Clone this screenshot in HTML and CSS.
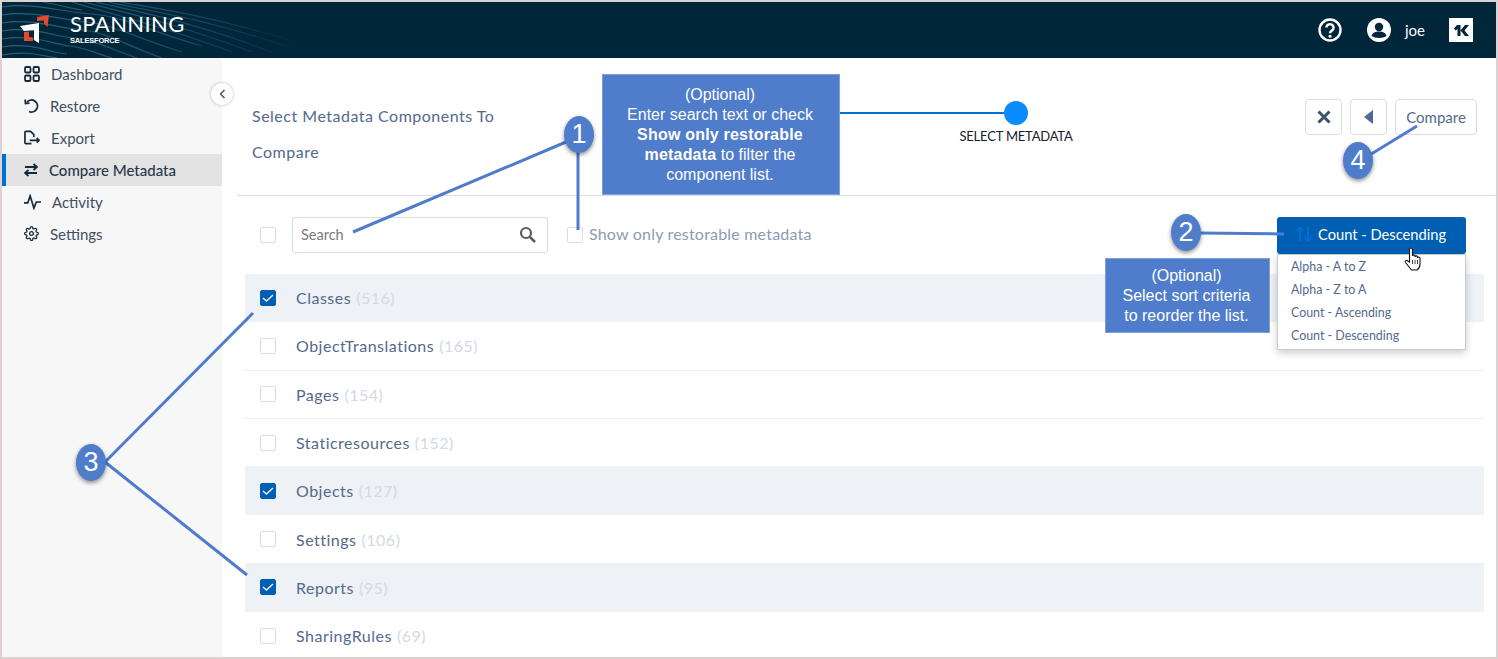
FILE: index.html
```html
<!DOCTYPE html>
<html lang="en">
<head>
  <meta charset="UTF-8" />
  <title>Spanning - Compare Metadata</title>
  <link rel="stylesheet" href="styles.css">
</head>
<body>
  <div class="frame">
    <header class="topbar">
      <svg class="waves" width="300" height="56" viewBox="0 0 300 56">
        <defs>
          <linearGradient id="waveFade" gradientUnits="userSpaceOnUse" x1="0" y1="0" x2="300" y2="0">
            <stop offset="0" stop-color="#2a6179" />
            <stop offset="0.55" stop-color="#1d5068" />
            <stop offset="1" stop-color="#00263a" />
          </linearGradient>
        </defs>
        <g fill="none" stroke="url(#waveFade)" stroke-width="1.200">
          <path d="M0 5C30 0 60 10 90 12S150 30 200 44" />
          <path d="M0 13C30 8 60 18 85 20S140 38 180 50" />
          <path d="M0 21C30 16 55 26 80 28S125 44 160 56" />
          <path d="M0 29C30 24 50 34 72 36S110 48 135 56" />
          <path d="M0 37C30 32 50 42 68 44S95 52 110 56" />
          <path d="M0 45C30 40 45 50 65 52" />
          <path d="M0 53C25 48 40 54 55 56" />
          <path d="M70 0C100 10 150 20 230 50" />
          <path d="M82 0C110 8 165 18 250 50" />
          <path d="M94 0C125 8 180 16 270 50" />
          <path d="M106 0C140 8 195 14 290 46" />
          <path d="M118 0C150 6 205 12 300 42" />
          <path d="M40 0C55 2 65 6 80 8" />
        </g>
      </svg>
      <div class="brand">
        <svg width="32" height="32" viewBox="18 14 32 32">
          <path d="M20 26L39 23V43L34 40V30L24 31Z" fill="#fff" />
          <path d="M37 17L49 15L47.500 27L44 23.500V20.500L37 21Z" fill="#e4492f" />
          <path d="M24 32L29 31.500V37L33 37.500V41L24 41Z" fill="#e4492f" />
        </svg>
        <div class="brand-text">
          <span class="brand-name">SPANNING</span>
          <span class="brand-sub">SALESFORCE</span>
        </div>
      </div>
      <div class="topbar-right">
        <svg width="24" height="24" viewBox="0 0 24 24">
          <circle cx="12" cy="12" r="10.500" fill="none" stroke="#fff" stroke-width="2.400" />
          <path d="M8.400 9.500a3.600 3.400 0 1 1 5.600 2.900c-1.200.8-2 1.300-2 2.800" fill="none" stroke="#fff" stroke-width="2.400" />
          <circle cx="12" cy="18.200" r="1.500" fill="#fff" />
        </svg>
        <svg class="user-icon" width="24" height="24" viewBox="0 0 24 24">
          <circle cx="12" cy="12" r="12" fill="#fff" />
          <circle cx="12" cy="9" r="4.200" fill="#00263a" />
          <path d="M4.500 18c1-3.400 4-4.400 7.500-4.400s6.500 1 7.500 4.400c-2 1.300-4.500 2-7.500 2s-5.500-.7-7.500-2z" fill="#00263a" />
        </svg>
        <span class="user-name">joe</span>
        <span class="kb-badge">
          <svg width="15" height="11" viewBox="0 0 15 11">
            <path d="M0 3.500L3 0H6.500V11H3.500V4L1.500 5.500ZM6.500 5.500L11 0H15L10.500 5.500L15 11H11Z" fill="#00263a" />
          </svg>
        </span>
      </div>
    </header>

    <div class="body">
      <nav class="sidebar">
        <a class="nav-item">
          <svg width="16" height="16" viewBox="0 0 16 16" class="nav-icon">
            <rect x="1" y="1" width="5.500" height="5.500" rx="1.300" />
            <rect x="9.500" y="1" width="5.500" height="5.500" rx="1.300" />
            <rect x="1" y="9.500" width="5.500" height="5.500" rx="1.300" />
            <rect x="9.500" y="9.500" width="5.500" height="5.500" rx="1.300" />
          </svg>
          Dashboard
        </a>
        <a class="nav-item">
          <svg width="15" height="15" viewBox="0 0 15 15" class="nav-icon">
            <path d="M3 4A6 6 0 1 1 5 13.500" />
            <path d="M1.200 1.500L1.500 5.500L5.500 5.200" />
          </svg>
          Restore
        </a>
        <a class="nav-item">
          <svg width="16" height="15" viewBox="0 0 17 15" class="nav-icon">
            <path d="M8 14H2a1 1 0 0 1-1-1V2a1 1 0 0 1 1-1H7L10.500 4.500V7" />
            <path d="M6 10.500H16M13.500 8L16 10.500L13.500 13" />
          </svg>
          Export
        </a>
        <a class="nav-item is-active">
          <svg width="14" height="14" viewBox="0 0 14 14" class="nav-icon">
            <path d="M1 4H13M9.500 1L13 4L9.500 7" />
            <path d="M13 10H1M4.500 7L1 10L4.500 13" />
          </svg>
          Compare Metadata
        </a>
        <a class="nav-item">
          <svg width="17" height="16" viewBox="0 0 18 16" class="nav-icon">
            <path d="M0 9H4L6.500 1.500L10.500 14.500L13 8H18" />
          </svg>
          Activity
        </a>
        <a class="nav-item">
          <svg width="15" height="15" viewBox="0 0 24 24" class="nav-icon gear">
            <circle cx="12" cy="12" r="3" />
            <path d="M19.400 15a1.650 1.650 0 0 0 .33 1.820l.06.06a2 2 0 0 1 0 2.830 2 2 0 0 1-2.830 0l-.06-.06a1.650 1.650 0 0 0-1.820-.33 1.650 1.650 0 0 0-1 1.510V21a2 2 0 0 1-2 2 2 2 0 0 1-2-2v-.09A1.650 1.650 0 0 0 9 19.400a1.650 1.650 0 0 0-1.820.33l-.06.06a2 2 0 0 1-2.830 0 2 2 0 0 1 0-2.830l.06-.06a1.650 1.650 0 0 0 .33-1.820 1.650 1.650 0 0 0-1.510-1H3a2 2 0 0 1-2-2 2 2 0 0 1 2-2h.09A1.650 1.650 0 0 0 4.600 9a1.650 1.650 0 0 0-.33-1.820l-.06-.06a2 2 0 0 1 0-2.830 2 2 0 0 1 2.830 0l.06.06a1.650 1.650 0 0 0 1.820.33H9a1.650 1.650 0 0 0 1-1.510V3a2 2 0 0 1 2-2 2 2 0 0 1 2 2v.09a1.650 1.650 0 0 0 1 1.510 1.650 1.650 0 0 0 1.820-.33l.06-.06a2 2 0 0 1 2.830 0 2 2 0 0 1 0 2.830l-.06.06a1.650 1.650 0 0 0-.33 1.820V9a1.650 1.650 0 0 0 1.510 1H21a2 2 0 0 1 2 2 2 2 0 0 1-2 2h-.09a1.650 1.650 0 0 0-1.510 1z" />
          </svg>
          Settings
        </a>
      </nav>
      <span class="collapse-btn">
        <svg width="7" height="10" viewBox="0 0 7 10"><path d="M5.500 1L1.500 5L5.500 9" /></svg>
      </span>

      <main class="content">
        <div class="wizard-head">
          <div class="wizard-title">Select Metadata Components To Compare</div>
          <div class="step">
            <span class="step-dot"></span>
            <span class="step-label">SELECT METADATA</span>
          </div>
          <div class="wizard-actions">
            <button class="btn btn-icon">
              <svg width="14" height="14" viewBox="0 0 14 14"><path d="M1.500 1.500L12.500 12.500M12.500 1.500L1.500 12.500" stroke="#3c5170" stroke-width="3" /></svg>
            </button>
            <button class="btn btn-icon">
              <svg width="9" height="14" viewBox="0 0 9 14"><path d="M9 0V14L0 7Z" fill="#4d6a92" /></svg>
            </button>
            <button class="btn btn-text">Compare</button>
          </div>
        </div>

        <div class="toolbar">
          <span class="check"></span>
          <div class="search">
            <span>Search</span>
            <svg width="17" height="17" viewBox="0 0 17 17"><circle cx="7" cy="7" r="5" fill="none" stroke="#5c5c5c" stroke-width="2.200" /><path d="M10.800 10.800L16 16" stroke="#5c5c5c" stroke-width="2.600" /></svg>
          </div>
          <span class="check"></span>
          <span class="restorable">Show only restorable metadata</span>
          <button class="sort-btn">
            <svg width="18" height="16" viewBox="0 0 18 16"><path d="M5 15V2M1.500 5L5 1.500L8.500 5M13 1V14M9.500 11L13 14.500L16.500 11" fill="none" stroke="#0070d2" stroke-width="2" /></svg>
            Count - Descending
          </button>
        </div>

        <ul class="meta-list">
          <li class="meta-row is-checked"><span class="check"><svg width="12" height="8" viewBox="0 0 12 8"><path d="M1 4L4.500 7L11 1" /></svg></span>Classes <span class="count">(516)</span></li>
          <li class="meta-row"><span class="check"></span>ObjectTranslations <span class="count">(165)</span></li>
          <li class="meta-row"><span class="check"></span>Pages <span class="count">(154)</span></li>
          <li class="meta-row"><span class="check"></span>Staticresources <span class="count">(152)</span></li>
          <li class="meta-row is-checked"><span class="check"><svg width="12" height="8" viewBox="0 0 12 8"><path d="M1 4L4.500 7L11 1" /></svg></span>Objects <span class="count">(127)</span></li>
          <li class="meta-row"><span class="check"></span>Settings <span class="count">(106)</span></li>
          <li class="meta-row is-checked"><span class="check"><svg width="12" height="8" viewBox="0 0 12 8"><path d="M1 4L4.500 7L11 1" /></svg></span>Reports <span class="count">(95)</span></li>
          <li class="meta-row"><span class="check"></span>SharingRules <span class="count">(69)</span></li>
        </ul>
      </main>
    </div>
  </div>

  <!-- dropdown + cursor -->
  <ul class="sort-menu">
    <li>Alpha - A to Z</li>
    <li>Alpha - Z to A</li>
    <li>Count - Ascending</li>
    <li>Count - Descending</li>
  </ul>
  <svg class="hand" width="18" height="24" viewBox="0 0 18 24">
    <path d="M5.500 15V2.500a1.500 1.500 0 0 1 3 0V9c0-1.500 2.500-1.500 2.500 0v1c0-1.500 2.500-1.500 2.500 0v1c0-1.300 2.500-1.300 2.500.2V17c0 3-1.500 5-3 6H7.500L1.500 15.500c-1-1.500 1-3 2.200-1.500Z" fill="#fff" stroke="#111" stroke-width="1.100" />
    <path d="M8.500 13v4M11 13v4M13.500 13v4" stroke="#111" stroke-width=".8" />
  </svg>

  <!-- annotations -->
  <svg class="annot-lines" width="1498" height="659" viewBox="0 0 1498 659">
    <path class="blue" d="M839 113H1004" />
    <path d="M353 232L566 142M578 150V230" />
    <path d="M1200 233L1284 234" />
    <path d="M253 313L105 462L247 575" />
    <path d="M1368 156L1417 126" />
  </svg>
  <div class="callout callout-one">(Optional)<br>Enter search text or check<br><b>Show only restorable<br>metadata</b> to filter the<br>component list.</div>
  <div class="callout callout-two">(Optional)<br>Select sort criteria<br>to reorder the list.</div>
  <span class="marker marker-one">1</span>
  <span class="marker marker-two">2</span>
  <span class="marker marker-three">3</span>
  <span class="marker marker-four">4</span>
</body>
</html>
```

FILE: styles.css
```css
* {
  box-sizing: border-box;
}
body {
  margin: 0;
  width: 1498px;
  height: 659px;
  overflow: hidden;
  position: relative;
  background: #fff;
  font-family: "Lato", "Open Sans", Arial, sans-serif;
  color: #54698d;
}
.frame {
  height: 659px;
  border: 2px solid #dcd3d1;
  display: flex;
  flex-direction: column;
}

/* top bar */
.topbar {
  height: 56px;
  flex: none;
  background-color: #00263a;
  position: relative;
  display: flex;
  align-items: center;
  justify-content: space-between;
  color: white;
}
.waves {
  position: absolute;
  left: 0;
  top: 0;
}
.brand {
  position: relative;
  display: flex;
  align-items: center;
  gap: 20px;
  padding-left: 16px;
}
.brand-text {
  display: flex;
  flex-direction: column;
  margin-top: -4px;
}
.brand-name {
  font-size: 22px;
  line-height: 24px;
  letter-spacing: 0.4px;
}
.brand-sub {
  font-size: 7.500px;
  line-height: 9px;
  font-weight: 700;
  font-family: "Liberation Sans", Arial, sans-serif;
  letter-spacing: -0.2px;
}
.topbar-right {
  display: flex;
  align-items: center;
  padding-right: 23px;
  margin-top: 0;
}
.user-icon {
  margin-left: 25px;
}
.user-name {
  font-size: 15px;
  margin-left: 14px;
}
.kb-badge {
  width: 24px;
  height: 24px;
  margin-left: 24px;
  background: white;
  display: flex;
  align-items: center;
  justify-content: center;
}

/* sidebar */
.body {
  flex: 1;
  display: flex;
  position: relative;
  min-height: 0;
}
.sidebar {
  width: 220px;
  flex: none;
  background-color: #f7f7f8;
}
.nav-item {
  height: 32px;
  display: flex;
  align-items: center;
  gap: 11px;
  padding-left: 22px;
  padding-bottom: 1px;
  font-size: 15px;
  color: #3e4f63;
}
.nav-icon {
  fill: none;
  stroke: #16293a;
  stroke-width: 1.800px;
}
.gear {
  stroke-width: 2px;
}
.nav-item.is-active {
  background-color: #e3e3e3;
  box-shadow: inset 4px 0 0 #0070d2;
  font-weight: 500;
  color: #27384a;
}
.collapse-btn {
  position: absolute;
  left: 209px;
  top: 25px;
  width: 22px;
  height: 22px;
  border-radius: 50%;
  background: white;
  box-shadow: 0 0 3px rgba(0, 0, 0, 0.3);
  display: flex;
  align-items: center;
  justify-content: center;
}
.collapse-btn path {
  fill: none;
  stroke: #3e4f63;
  stroke-width: 1.400px;
}

/* main */
.content {
  flex: 1;
  min-width: 0;
  overflow: hidden;
  padding-left: 15px;
}
.wizard-head {
  height: 138px;
  border-bottom: 1px solid #d8dde6;
  display: flex;
  position: relative;
}
.wizard-title {
  width: 290px;
  padding: 40px 0 0 15px;
  font-size: 16px;
  letter-spacing: 0.5px;
  line-height: 36px;
}
.step {
  margin-left: 424px;
  width: 130px;
  padding-top: 43px;
  display: flex;
  flex-direction: column;
  align-items: center;
}
.step-dot {
  width: 24px;
  height: 24px;
  border-radius: 50%;
  background: #0a8cff;
}
.step-label {
  font-size: 13px;
  line-height: 14px;
  margin-top: 4px;
  letter-spacing: -0.2px;
  color: #16202c;
  white-space: nowrap;
}
.wizard-actions {
  margin-left: auto;
  margin-right: 19px;
  padding-top: 41px;
  display: flex;
  gap: 8px;
}
.btn {
  height: 36px;
  background: white;
  border: 1px solid #d8dde6;
  border-radius: 4px;
  display: flex;
  align-items: center;
  justify-content: center;
  padding: 0;
}
.btn-icon {
  width: 37px;
}
.btn-text {
  width: 82px;
  font-family: inherit;
  font-size: 15px;
  color: #54698d;
}

.toolbar {
  height: 78px;
  padding: 21px 0 0 23px;
  display: flex;
  align-items: flex-start;
  position: relative;
}
.check {
  width: 16px;
  height: 16px;
  flex: none;
  background: white;
  border: 1px solid #d8dde6;
  border-radius: 2px;
  display: flex;
  align-items: center;
  justify-content: center;
}
.toolbar > .check {
  margin-top: 10px;
}
.search {
  width: 256px;
  height: 36px;
  margin: 0 19px 0 16px;
  border: 1px solid #d8dde6;
  border-radius: 3px;
  display: flex;
  align-items: center;
  justify-content: space-between;
  padding: 0 11px 1px 8px;
  font-size: 14.500px;
  color: #7a7a7a;
}
.restorable {
  font-size: 16px;
  letter-spacing: 0.2px;
  line-height: 34px;
  margin-left: 6px;
  color: #8d9cb3;
}
.sort-btn {
  position: absolute;
  left: 1040px;
  top: 21px;
  width: 189px;
  height: 37px;
  background-color: #005fb2;
  border: 0;
  border-radius: 3px;
  color: white;
  font-family: inherit;
  font-size: 14.700px;
  display: flex;
  align-items: center;
  gap: 5px;
  padding: 0 0 3px 18px;
}
.meta-list {
  list-style: none;
  margin: 0 12px 0 8px;
  padding: 0;
}
.meta-row {
  height: 48.300px;
  border-bottom: 1px solid #eef1f6;
  display: flex;
  align-items: center;
  gap: 5px;
  padding-left: 15px;
  font-size: 16px;
  letter-spacing: 0.5px;
}
.meta-row .check {
  margin-right: 15px;
}
.meta-row.is-checked {
  background-color: #eef1f6;
}
.is-checked .check {
  background-color: #005fb2;
  border-color: #005fb2;
}
.is-checked .check path {
  fill: none;
  stroke: #e8f0f8;
  stroke-width: 1.500px;
}
.count {
  color: #d3d9e5;
}

/* dropdown */
.sort-menu {
  position: absolute;
  left: 1277px;
  top: 254px;
  width: 189px;
  height: 96px;
  margin: 0;
  padding: 0 0 0 13px;
  list-style: none;
  background: white;
  border: 1px solid #c9ccd1;
  box-shadow: 0 3px 8px rgba(0, 0, 0, 0.2);
  font-size: 12.400px;
  color: #54698d;
}
.sort-menu li {
  height: 23px;
  line-height: 23px;
}
.hand {
  position: absolute;
  left: 1404px;
  top: 247px;
}

/* annotations */
.annot-lines {
  position: absolute;
  left: 0;
  top: 0;
  pointer-events: none;
}
.annot-lines path {
  fill: none;
  stroke: #4f7ccb;
  stroke-width: 3px;
}
.annot-lines .blue {
  stroke: #0070d2;
  stroke-width: 2px;
}
.callout {
  position: absolute;
  background-color: #4f7ccb;
  border: 1px solid #7d9fdc;
  color: white;
  font-family: "Liberation Sans", Arial, sans-serif;
  text-align: center;
  font-size: 16px;
  line-height: 20px;
}
.callout b {
  letter-spacing: 0.2px;
}
.callout-one {
  left: 602px;
  top: 74px;
  width: 238px;
  height: 121px;
  padding: 10px 2px 0 0;
}
.callout-two {
  left: 1105px;
  top: 258px;
  width: 165px;
  height: 75px;
  padding: 7px 2px 0 0;
}
.marker {
  position: absolute;
  width: 30px;
  height: 37px;
  border-radius: 50%;
  background-color: #4f7ccb;
  box-shadow: 0 2px 4px rgba(0, 0, 0, 0.45);
  color: white;
  font-family: "Liberation Sans", Arial, sans-serif;
  font-size: 27px;
  line-height: 37px;
  text-align: center;
}
.marker-one {
  left: 564px;
  top: 116px;
}
.marker-two {
  left: 1171px;
  top: 214px;
}
.marker-three {
  left: 76px;
  top: 444px;
}
.marker-four {
  left: 1343px;
  top: 142px;
}
```
